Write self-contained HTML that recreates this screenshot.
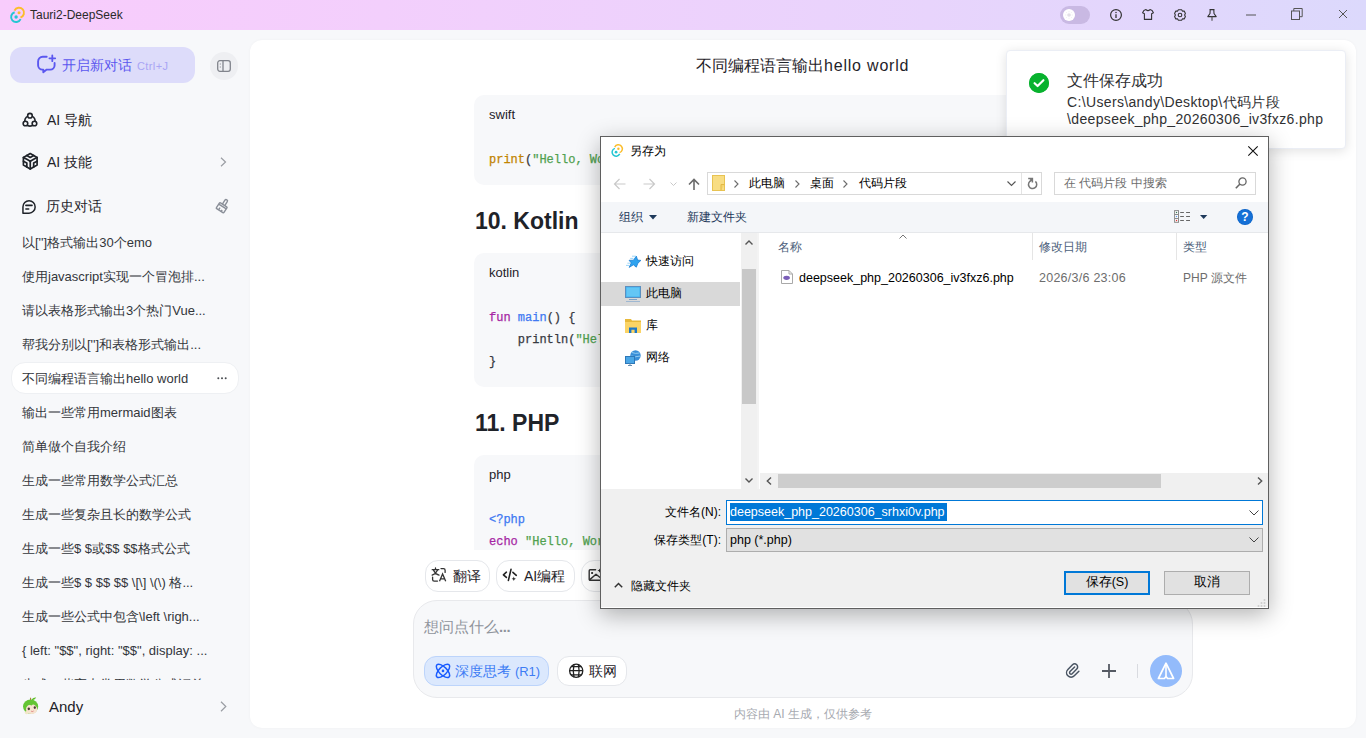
<!DOCTYPE html>
<html><head><meta charset="utf-8">
<style>
*{box-sizing:border-box;margin:0;padding:0}
html,body{width:1366px;height:738px;overflow:hidden}
body{position:relative;background:#f7f8fa;font-family:"Liberation Sans",sans-serif;color:#1f2329}
.a{position:absolute;white-space:nowrap}
svg{position:absolute;overflow:visible}
#tb{left:0;top:0;width:1366px;height:30px;background:linear-gradient(90deg,#f8ccfc 0%,#f3cffc 28%,#e8d4fc 68%,#dcd9fc 100%)}
#main{left:250px;top:40px;width:1106px;height:688px;background:#fff;border-radius:12px;box-shadow:0 0 3px rgba(0,0,0,.04)}
.hist{left:22px;font-size:13px;color:#33363b;line-height:16px}
.code{left:474px;width:656px;background:#f7f8fa;border-radius:10px}
.mono{font-family:"Liberation Mono",monospace;font-size:12px;-webkit-text-stroke:.25px}
.h2{left:475px;font-size:23px;font-weight:bold;color:#1f2329}
.chip{border:1px solid #e5e7eb;border-radius:13px;background:#fff}
</style></head><body>

<!-- title bar -->
<div id="tb" class="a"></div>
<div class="a" style="left:30px;top:7px;font-size:12px;line-height:16px;color:#2a2a2a">Tauri2-DeepSeek</div>

<!-- sidebar -->
<div class="a" style="left:10px;top:47px;width:185px;height:36px;border-radius:12px;background:#dddcfa"></div>
<div class="a" style="left:62px;top:57px;font-size:14px;line-height:16px;color:#5b57ef">开启新对话</div>
<div class="a" style="left:137px;top:59px;font-size:11px;line-height:14px;color:#a9a5f5;letter-spacing:.4px">Ctrl+J</div>
<div class="a" style="left:210px;top:52px;width:28px;height:28px;border-radius:14px;background:#eeeff2"></div>

<div class="a" style="left:47px;top:112px;font-size:14px;line-height:16px;color:#1f2329">AI 导航</div>
<div class="a" style="left:47px;top:154px;font-size:14px;line-height:16px;color:#1f2329">AI 技能</div>
<div class="a" style="left:46px;top:198px;font-size:14px;line-height:16px;color:#1f2329">历史对话</div>

<div class="a" style="left:11px;top:362px;width:228px;height:32px;border-radius:14px;background:#fff;border:1px solid #eef0f3"></div>
<div class="a" style="left:0;top:227px;width:250px;height:453px;overflow:hidden">
  <div class="a hist" style="top:8px">以['']格式输出30个emo</div>
  <div class="a hist" style="top:42px">使用javascript实现一个冒泡排...</div>
  <div class="a hist" style="top:76px">请以表格形式输出3个热门Vue...</div>
  <div class="a hist" style="top:110px">帮我分别以['']和表格形式输出...</div>
  <div class="a hist" style="top:144px">不同编程语言输出hello world</div>
  <div class="a hist" style="top:178px">输出一些常用mermaid图表</div>
  <div class="a hist" style="top:212px">简单做个自我介绍</div>
  <div class="a hist" style="top:246px">生成一些常用数学公式汇总</div>
  <div class="a hist" style="top:280px">生成一些复杂且长的数学公式</div>
  <div class="a hist" style="top:314px">生成一些$ $或$$ $$格式公式</div>
  <div class="a hist" style="top:348px">生成一些$ $ $$ $$ \[\] \(\) 格...</div>
  <div class="a hist" style="top:382px">生成一些公式中包含\left \righ...</div>
  <div class="a hist" style="top:416px">{ left: "$$", right: "$$", display: ...</div>
  <div class="a hist" style="top:450px">生成一些高中常用数学公式汇总</div>
</div>
<div class="a" style="left:49px;top:699px;font-size:15px;line-height:16px;color:#1f2329">Andy</div>

<!-- main -->
<div id="main" class="a"></div>
<div class="a" style="left:696px;top:57px;font-size:16px;line-height:18px;color:#1f2329">不同编程语言输出<span style="letter-spacing:.8px">hello world</span></div>

<div class="a" style="left:250px;top:90px;width:1106px;height:460px;overflow:hidden">
  <div class="a code" style="left:224px;top:5px;height:90px"></div>
  <div class="a" style="left:239px;top:17px;font-size:13px;line-height:16px">swift</div>
  <div class="a mono" style="left:239px;top:62px;line-height:16px"><span style="color:#c18401">print</span><span style="color:#383a42">(</span><span style="color:#50a14f">"Hello, World!"</span><span style="color:#383a42">)</span></div>

  <div class="a h2" style="left:225px;top:118px;line-height:26px">10. Kotlin</div>

  <div class="a code" style="left:224px;top:163px;height:134px"></div>
  <div class="a" style="left:239px;top:175px;font-size:13px;line-height:16px">kotlin</div>
  <div class="a mono" style="left:239px;top:217px;line-height:22px;white-space:pre;color:#383a42"><span style="color:#a626a4">fun</span> <span style="color:#4078f2">main</span>() {
    println(<span style="color:#50a14f">"Hello, World!"</span>)
}</div>

  <div class="a h2" style="left:225px;top:320px;line-height:26px">11. PHP</div>

  <div class="a code" style="left:224px;top:365px;height:134px"></div>
  <div class="a" style="left:239px;top:377px;font-size:13px;line-height:16px">php</div>
  <div class="a mono" style="left:239px;top:419px;line-height:22px;white-space:pre;color:#383a42"><span style="color:#4078f2">&lt;?php</span>
<span style="color:#a626a4">echo</span> <span style="color:#50a14f">"Hello, World!"</span>;
<span style="color:#4078f2">?&gt;</span></div>
</div>

<!-- chips -->
<div class="a chip" style="left:425px;top:560px;width:65px;height:32px"></div>
<div class="a" style="left:453px;top:568px;font-size:14px;line-height:16px;color:#1f2329">翻译</div>
<div class="a chip" style="left:496px;top:560px;width:79px;height:32px"></div>
<div class="a" style="left:524px;top:568px;font-size:14px;line-height:16px;color:#1f2329">AI编程</div>
<div class="a chip" style="left:581px;top:560px;width:79px;height:32px"></div>

<!-- input box -->
<div class="a" style="left:413px;top:600px;width:780px;height:98px;border-radius:24px;background:#f7f8fa;border:1px solid #e8e9ec"></div>
<div class="a" style="left:424px;top:619px;font-size:14.8px;line-height:16px;color:#8f949c">想问点什么<span style="letter-spacing:-.3px;font-weight:bold">...</span></div>
<div class="a" style="left:424px;top:656px;width:125px;height:30px;border-radius:12px;background:#dbe8fd;border:1px solid #bcd4fb"></div>
<div class="a" style="left:455px;top:663px;font-size:14px;line-height:16px;color:#3d7cf4">深度思考 <span style="font-size:13px">(R1)</span></div>
<div class="a chip" style="left:557px;top:656px;width:70px;height:30px;border-radius:12px"></div>
<div class="a" style="left:589px;top:663px;font-size:14px;line-height:16px;color:#1f2329">联网</div>
<div class="a" style="left:1137px;top:664px;width:1px;height:14px;background:#d9dbe0"></div>
<div class="a" style="left:1150px;top:655px;width:32px;height:32px;border-radius:16px;background:#93bbfb"></div>
<div class="a" style="left:734px;top:707px;font-size:12px;line-height:14px;color:#a7aab0">内容由 AI 生成，仅供参考</div>

<!-- toast -->
<div class="a" style="left:1006px;top:50px;width:340px;height:99px;background:#fff;border-radius:4px;box-shadow:0 2px 12px rgba(0,0,0,.12);border:1px solid #ebeef5"></div>
<div class="a" style="left:1029px;top:73px;width:20px;height:20px;border-radius:10px;background:#14b33c"></div>
<div class="a" style="left:1067px;top:72px;font-size:16px;line-height:18px;color:#303133">文件保存成功</div>
<div class="a" style="left:1067px;top:94px;font-size:14px;line-height:17px;color:#303133;letter-spacing:.35px">C:\Users\andy\Desktop\代码片段<br>\deepseek_php_20260306_iv3fxz6.php</div>



<!-- icons -->
<svg style="left:6px;top:3px" width="24" height="24" viewBox="0 0 24 24"><path d="M8.47 7.64A5 5 0 1 1 14.46 14.53" stroke="#fbbd2b" stroke-width="1.9" fill="none"/><circle cx="13" cy="9.75" r="1.5" fill="#fbbd2b"/><path d="M14.63 16.11A5 5 0 1 1 8.64 9.22" stroke="#25c6d2" stroke-width="1.9" fill="none"/><circle cx="10.1" cy="14" r="1.7" fill="#25c6d2"/></svg>
<div class="a" style="left:1060px;top:6px;width:30px;height:18px;border-radius:9px;background:#c9b9e3"></div>
<div class="a" style="left:1063px;top:9px;width:12px;height:12px;border-radius:6px;background:#fff"></div>
<svg style="left:1065px;top:11px" width="8" height="8" viewBox="0 0 8 8"><circle cx="4" cy="4" r="1.8" fill="#e3e0e8"/><path d="M4 0.3V1.2M4 6.8V7.7M0.3 4H1.2M6.8 4H7.7M1.4 1.4L2 2M6 6L6.6 6.6M1.4 6.6L2 6M6 2L6.6 1.4" stroke="#e6e3ea" stroke-width="0.8"/></svg>
<svg style="left:1110px;top:8.5px" width="12" height="12" viewBox="0 0 12 12"><circle cx="6" cy="6" r="5.4" stroke="#333" stroke-width="1.2" fill="none"/><circle cx="6" cy="3.5" r="0.75" fill="#333"/><path d="M6 5.3V9" stroke="#333" stroke-width="1.3"/></svg>
<svg style="left:1142px;top:9px" width="12" height="11" viewBox="0 0 12 11"><path d="M4 0.6L1.9 1.4L0.6 3.8L2.4 4.8V10.4H9.6V4.8L11.4 3.8L10.1 1.4L8 0.6Q6 2.6 4 0.6Z" stroke="#333" stroke-width="1.1" fill="none" stroke-linejoin="round"/></svg>
<svg style="left:1174px;top:8.5px" width="12" height="12" viewBox="0 0 12 12"><path d="M4.4 0.7H7.6L8.4 2.1L10.2 2.1L11.4 4.6L10.6 6L11.4 7.4L10.2 9.9L8.4 9.9L7.6 11.3H4.4L3.6 9.9L1.8 9.9L0.6 7.4L1.4 6L0.6 4.6L1.8 2.1L3.6 2.1Z" stroke="#333" stroke-width="1.1" fill="none" stroke-linejoin="round"/><circle cx="6" cy="6" r="1.8" stroke="#333" stroke-width="1.1" fill="none"/></svg>
<svg style="left:1207px;top:9px" width="10" height="12" viewBox="0 0 10 12"><path d="M2.5 0.6H7.5M3.2 0.6L3 4.5L0.8 7.6H9.2L7 4.5L6.8 0.6" stroke="#333" stroke-width="1.1" fill="none" stroke-linejoin="round"/><path d="M5 7.6V11.8" stroke="#555" stroke-width="1.2"/></svg>
<svg style="left:1246px;top:13.5px" width="10" height="2" viewBox="0 0 10 2"><path d="M0 1H10" stroke="#555" stroke-width="1"/></svg>
<svg style="left:1291px;top:8px" width="12" height="12" viewBox="0 0 12 12"><rect x="0.5" y="3" width="8" height="8.5" stroke="#555" stroke-width="1" fill="none"/><path d="M2.8 3V0.5H11.2V8.7H8.5" stroke="#555" stroke-width="1" fill="none"/></svg>
<svg style="left:1339px;top:10px" width="8" height="8" viewBox="0 0 8 8"><path d="M0 0L8 8M8 0L0 8" stroke="#555" stroke-width="1"/></svg>

<svg style="left:34px;top:52px" width="26" height="26" viewBox="0 0 26 26"><path d="M12.7 4.8H8.7A4.6 4.6 0 0 0 4.1 9.4V13.3A4.3 4.3 0 0 0 8.4 17.6H9.3V20.2L12.7 17.6H16.3A4.3 4.3 0 0 0 20.6 13.3V10.9" stroke="#5b57ef" stroke-width="1.9" fill="none" stroke-linecap="round" stroke-linejoin="round"/><path d="M18.3 3.4V9.2M15.4 6.3H21.2" stroke="#5b57ef" stroke-width="1.8" stroke-linecap="round"/></svg>
<svg style="left:217px;top:60px" width="14" height="12" viewBox="0 0 14 12"><rect x="0.7" y="0.7" width="12.6" height="10.6" rx="2.2" stroke="#81848c" stroke-width="1.3" fill="none"/><path d="M6 0.7V11.3" stroke="#81848c" stroke-width="1.3"/><path d="M2.8 4H3.8M2.8 7H3.8" stroke="#81848c" stroke-width="1"/></svg>

<svg style="left:18px;top:108px" width="24" height="24" viewBox="0 0 24 24"><circle cx="11.95" cy="12.9" r="5.2" stroke="#1f2329" stroke-width="1.6" fill="none"/><circle cx="11.95" cy="7.7" r="2.3" stroke="#1f2329" stroke-width="1.6" fill="#f7f8fa"/><circle cx="7.45" cy="15.5" r="2.3" stroke="#1f2329" stroke-width="1.6" fill="#f7f8fa"/><circle cx="16.45" cy="15.5" r="2.3" stroke="#1f2329" stroke-width="1.6" fill="#f7f8fa"/></svg>
<svg style="left:19.75px;top:151.45px" width="20.5" height="20.5" viewBox="0 0 24 24"><g stroke="#1f2329" stroke-width="2" fill="none" stroke-linecap="round" stroke-linejoin="round"><path d="M20 7.5v9l-4 2.25l-4 2.25l-4 -2.25l-4 -2.25v-9l4 -2.25l4 -2.25l4 2.25z"/><path d="M12 12l4 -2.25l4 -2.25"/><path d="M12 12l0 9"/><path d="M12 12l-4 -2.25l-4 -2.25"/><path d="M20 12l-4 2v4.75"/><path d="M4 12l4 2l0 4.75"/><path d="M8 5.25l4 2.25l4 -2.25"/></g></svg>
<svg style="left:17px;top:195px" width="24" height="24" viewBox="0 0 24 24"><path d="M5.95 18.15V11.95A6.1 6.2 0 1 1 12.05 18.15Z" stroke="#1f2329" stroke-width="1.5" fill="none" stroke-linejoin="round"/><path d="M8.9 10.4H15M8.9 14H11.7" stroke="#1f2329" stroke-width="1.6" stroke-linecap="round"/></svg>
<svg style="left:220px;top:157px" width="7" height="10" viewBox="0 0 7 10"><path d="M1 0.8L5.5 5L1 9.2" stroke="#9a9da3" stroke-width="1.2" fill="none"/></svg>
<svg style="left:210px;top:193px" width="24" height="24" viewBox="0 0 24 24"><g transform="translate(12.5 13.5) rotate(33)" stroke="#8a8f98" stroke-width="1.4" fill="none" stroke-linejoin="round"><path d="M-1.4 -2V-6.6A1.4 1.4 0 0 1 1.4 -6.6V-2"/><rect x="-4.5" y="-2" width="9" height="7" rx="0.8"/><path d="M-4.5 0H4.5M-1.5 2.2V5M1.5 3V5"/></g></svg>
<svg style="left:217px;top:377px" width="10" height="3" viewBox="0 0 10 3"><circle cx="1.3" cy="1.3" r="1" fill="#4a4d52"/><circle cx="5" cy="1.3" r="1" fill="#4a4d52"/><circle cx="8.7" cy="1.3" r="1" fill="#4a4d52"/></svg>
<svg style="left:22px;top:697px" width="18" height="18" viewBox="0 0 18 18"><path d="M8.6 3.3Q8.3 1.6 8.8 0.8" stroke="#b07a3a" stroke-width="1.1" fill="none"/><path d="M9.5 2.6Q11.5 0.2 14.2 0.6Q13.2 2.8 10.5 3.2Z" fill="#5fc02a"/><ellipse cx="8.6" cy="9.6" rx="7.6" ry="7.2" fill="#64c534"/><ellipse cx="9.6" cy="12.2" rx="5.6" ry="4.9" fill="#f6e2cf"/><path d="M3.5 9.5Q6 6.5 9.5 8.5Q12 6 15.5 8Q14 5 9 5Q4.5 5 3.5 9.5Z" fill="#64c534"/><ellipse cx="6.8" cy="11.8" rx="1.2" ry="1.4" fill="#4a3b36"/><ellipse cx="12.8" cy="10.6" rx="1.1" ry="1.3" fill="#4a3b36"/><path d="M9.2 14.2Q10.4 15 11.6 14" stroke="#d77" stroke-width="0.9" fill="none"/><ellipse cx="4.6" cy="15.6" rx="1.8" ry="1.6" fill="#f2e6c8"/></svg>
<svg style="left:220px;top:701px" width="7" height="11" viewBox="0 0 7 11"><path d="M1 0.8L5.8 5.5L1 10.2" stroke="#9a9da3" stroke-width="1.2" fill="none"/></svg>

<!-- chips icons -->
<svg style="left:427px;top:564px" width="24" height="24" viewBox="0 0 24 24"><g stroke="#333" stroke-width="1.3" fill="none" stroke-linecap="round"><path d="M5.2 5.7H11.8M8.5 4V5.7M6.4 6Q8 9.8 12 11.2M10.6 6Q9 9.8 5.2 11.2"/><path d="M14 4.6H16.5A1.6 1.6 0 0 1 18.1 6.2V8.4M5.6 13.1V15.5A1.6 1.6 0 0 0 7.2 17.1H10.5"/><path d="M12.5 17.3L15.6 9.9L18.7 17.3M13.6 14.8H17.6" stroke-linecap="butt"/></g></svg>
<svg style="left:499px;top:564px" width="24" height="24" viewBox="0 0 24 24"><g stroke="#222" stroke-width="1.6" fill="none" stroke-linecap="round" stroke-linejoin="round"><path d="M7.4 8.2L4.4 10.8L7.4 13.4"/><path d="M12 5.4L9.4 16.4"/><path d="M13.9 8.3L17.3 11.3"/></g><path d="M14.8 12.6L15.4 14.2L17 14.8L15.4 15.4L14.8 17L14.2 15.4L12.6 14.8L14.2 14.2Z" fill="#222"/></svg>
<svg style="left:583px;top:564px" width="24" height="24" viewBox="0 0 24 24"><g stroke="#333" stroke-width="1.4" fill="none" stroke-linecap="round" stroke-linejoin="round"><path d="M12.6 5.8H7.2A1 1 0 0 0 6.2 6.8V15.2A1 1 0 0 0 7.2 16.2H18"/><path d="M6.8 15.6L13 10.2L18 14.2"/></g><circle cx="9.1" cy="9" r="1.1" fill="#222"/><path d="M16.6 4.4L17.2 6L18.8 6.6L17.2 7.2L16.6 8.8L16 7.2L14.4 6.6L16 6Z" fill="#222"/></svg>
<svg style="left:431px;top:659px" width="24" height="24" viewBox="0 0 24 24"><g stroke="#1a5cff" stroke-width="1.5" fill="none"><ellipse cx="12" cy="11.9" rx="8.6" ry="3.9" transform="rotate(45 12 11.9)"/><ellipse cx="12" cy="11.9" rx="8.6" ry="3.9" transform="rotate(-45 12 11.9)"/></g><circle cx="12" cy="11.9" r="1.3" fill="#1a5cff"/></svg>
<svg style="left:564px;top:659px" width="24" height="24" viewBox="0 0 24 24"><g stroke="#222" stroke-width="1.3" fill="none"><circle cx="12.2" cy="11.8" r="6.6"/><path d="M5.6 11.6H18.8M7 7.6H17.4M7 15.9H17.4"/><path d="M10 5.4Q8.6 11.8 10 18.2M14.4 5.4Q15.8 11.8 14.4 18.2"/></g></svg>
<svg style="left:1063.8px;top:662.3px" width="17" height="17" viewBox="0 0 24 24"><path d="M15 7l-6.5 6.5a1.5 1.5 0 0 0 3 3l6.5 -6.5a3 3 0 0 0 -6 -6l-6.5 6.5a4.5 4.5 0 0 0 9 9l6.5 -6.5" stroke="#4a5563" stroke-width="2.1" fill="none" stroke-linecap="round" stroke-linejoin="round"/></svg>
<svg style="left:1102px;top:664px" width="14" height="14" viewBox="0 0 14 14"><path d="M7 0V14M0 7H14" stroke="#555a63" stroke-width="1.8"/></svg>
<svg style="left:1150px;top:655px" width="32" height="32" viewBox="0 0 32 32"><path d="M16 8.2L23.6 23.5H17.6L16 21.4L14.4 23.5H8.4Z" stroke="#fff" stroke-width="1.7" fill="none" stroke-linejoin="round"/><path d="M16 8.5V21.6" stroke="#fff" stroke-width="1.6"/></svg>
<svg style="left:1029px;top:73px" width="20" height="20" viewBox="0 0 20 20"><circle cx="10" cy="10" r="10" fill="#08b22e"/><path d="M5.6 10.2L8.6 13L14.4 7.2" stroke="#fff" stroke-width="2.2" fill="none" stroke-linecap="round" stroke-linejoin="round"/></svg>

<!-- dialog -->
<div id="dlg" class="a" style="left:600px;top:136px;width:669px;height:473px;background:#fff;border:1px solid #5f5f5f;box-shadow:0 6px 22px rgba(0,0,0,.30)"></div>
<svg style="left:607.9px;top:140.8px" width="19.2" height="19.2" viewBox="0 0 24 24"><path d="M8.47 7.64A5 5 0 1 1 14.46 14.53" stroke="#fbbd2b" stroke-width="1.9" fill="none"/><circle cx="13" cy="9.75" r="1.5" fill="#fbbd2b"/><path d="M14.63 16.11A5 5 0 1 1 8.64 9.22" stroke="#25c6d2" stroke-width="1.9" fill="none"/><circle cx="10.1" cy="14" r="1.7" fill="#25c6d2"/></svg>
<div class="a dt" style="left:630px;top:144px;font-size:12px;line-height:15px;color:#000">另存为</div>
<svg style="left:1248px;top:146px" width="10" height="10" viewBox="0 0 10 10"><path d="M0.3 0.3L9.7 9.7M9.7 0.3L0.3 9.7" stroke="#111" stroke-width="1.1" fill="none"/></svg>
<!-- nav arrows -->
<svg style="left:613px;top:178px" width="13" height="12" viewBox="0 0 13 12"><path d="M12.5 6H1.5M6.5 1L1.5 6L6.5 11" stroke="#c9c9c9" stroke-width="1.2" fill="none"/></svg>
<svg style="left:643px;top:178px" width="13" height="12" viewBox="0 0 13 12"><path d="M0.5 6H11.5M6.5 1L11.5 6L6.5 11" stroke="#c9c9c9" stroke-width="1.2" fill="none"/></svg>
<svg style="left:670px;top:182px" width="7" height="4" viewBox="0 0 7 4"><path d="M0.5 0.5L3.5 3.5L6.5 0.5" stroke="#c9c9c9" stroke-width="1" fill="none"/></svg>
<svg style="left:688px;top:178px" width="12" height="12" viewBox="0 0 12 12"><path d="M6 12V1.5M1 6.5L6 1.5L11 6.5" stroke="#6b6b6b" stroke-width="1.6" fill="none"/></svg>
<!-- address bar -->
<div class="a" style="left:707px;top:172px;width:335px;height:23px;border:1px solid #d9d9d9;background:#fff"></div>
<div class="a" style="left:1021px;top:173px;width:1px;height:21px;background:#e3e3e3"></div>
<svg style="left:712px;top:175px" width="13" height="16" viewBox="0 0 13 16"><rect x="0.5" y="0.5" width="12" height="15" fill="#f8dd83" stroke="#e8c352" stroke-width="1"/><path d="M9 15.5V9.5H12.5" stroke="#e3b945" fill="#f5d46c"/></svg>
<svg style="left:734px;top:180px" width="5" height="8" viewBox="0 0 5 8"><path d="M0.5 0.5L4 4L0.5 7.5" stroke="#6b6b6b" stroke-width="1.1" fill="none"/></svg>
<div class="a dt" style="left:749px;top:176px;font-size:12px;line-height:15px;color:#000">此电脑</div>
<svg style="left:795px;top:180px" width="5" height="8" viewBox="0 0 5 8"><path d="M0.5 0.5L4 4L0.5 7.5" stroke="#6b6b6b" stroke-width="1.1" fill="none"/></svg>
<div class="a dt" style="left:810px;top:176px;font-size:12px;line-height:15px;color:#000">桌面</div>
<svg style="left:843px;top:180px" width="5" height="8" viewBox="0 0 5 8"><path d="M0.5 0.5L4 4L0.5 7.5" stroke="#6b6b6b" stroke-width="1.1" fill="none"/></svg>
<div class="a dt" style="left:859px;top:176px;font-size:12px;line-height:15px;color:#000">代码片段</div>
<svg style="left:1007px;top:181px" width="9" height="5" viewBox="0 0 9 5"><path d="M0.5 0.5L4.5 4.5L8.5 0.5" stroke="#555" stroke-width="1.1" fill="none"/></svg>
<svg style="left:1022px;top:172px" width="20" height="23" viewBox="0 0 20 23"><path d="M9.4 8.5A4.1 4.1 0 1 0 13.4 9.4" stroke="#777" stroke-width="1.5" fill="none"/><path d="M6.2 6.4H10.4V10.4M10.4 6.4L8.2 8.6" stroke="#777" stroke-width="1.5" fill="none"/></svg>
<!-- search -->
<div class="a" style="left:1054px;top:172px;width:202px;height:23px;border:1px solid #d9d9d9;background:#fff"></div>
<div class="a dt" style="left:1064px;top:176px;font-size:12px;line-height:15px;color:#6d6d6d">在 代码片段 中搜索</div>
<svg style="left:1235px;top:177px" width="12" height="12" viewBox="0 0 12 12"><circle cx="7.5" cy="4.5" r="3.6" stroke="#666" stroke-width="1.3" fill="none"/><path d="M5 7L0.8 11.2" stroke="#666" stroke-width="1.6"/></svg>
<!-- toolbar -->
<div class="a" style="left:601px;top:202px;width:667px;height:31px;background:#f4f6f9;border-bottom:1px solid #e6e8eb"></div>
<div class="a dt" style="left:619px;top:210px;font-size:12px;line-height:15px;color:#1e395b">组织</div>
<svg style="left:649px;top:215px" width="8" height="5" viewBox="0 0 8 5"><path d="M0 0H8L4 4.5Z" fill="#1e395b"/></svg>
<div class="a dt" style="left:687px;top:210px;font-size:12px;line-height:15px;color:#1e395b">新建文件夹</div>
<svg style="left:1170px;top:205px" width="40" height="25" viewBox="0 0 40 25"><rect x="4.6" y="5.6" width="3.9" height="11.7" fill="#fff" stroke="#8a8a8a" stroke-width="1"/><path d="M4.6 9.5H8.5M4.6 13.5H8.5" stroke="#8a8a8a" stroke-width="1"/><circle cx="6.55" cy="7.5" r=".7" fill="#3a7a5a"/><circle cx="6.55" cy="11.5" r=".7" fill="#5b9cf0"/><circle cx="6.55" cy="15.5" r=".7" fill="#d33"/><path d="M10.2 7.5H13.9M16.1 7.5H20M10.2 11.5H13.9M16.1 11.5H20M10.2 15.5H13.9M16.1 15.5H20" stroke="#666" stroke-width="1"/></svg>
<svg style="left:1199.8px;top:214.8px" width="8" height="5" viewBox="0 0 8 5"><path d="M0 0H7.3L3.65 4.1Z" fill="#1e395b"/></svg>
<svg style="left:1237px;top:209px" width="16" height="16" viewBox="0 0 16 16"><circle cx="8" cy="8" r="8" fill="#0b63c7"/><circle cx="8" cy="8" r="7.3" fill="#1570d6"/><text x="8" y="12.2" text-anchor="middle" font-family="Liberation Sans" font-weight="bold" font-size="12" fill="#fff">?</text></svg>
<!-- nav pane -->
<div class="a" style="left:601px;top:282px;width:139px;height:24px;background:#d9d9d9"></div>
<svg style="left:620px;top:252px" width="24" height="20" viewBox="0 0 24 20"><path d="M16.3 4.1L17.6 8.1L20.9 8.4L17.9 11.2L16.3 15.2L13.4 12.8L9.2 15.4L11.2 10.9L9.1 8.3L13.5 8.2Z" fill="#2ea3ef" stroke="#1a7fd4" stroke-width="0.8" stroke-linejoin="round"/><path d="M12 4.2H16M10.2 6.4H13.4M7.4 11.2H10M6 13.4H9" stroke="#8fd0f7" stroke-width="0.9"/></svg>
<div class="a dt" style="left:646px;top:254px;font-size:12px;line-height:15px;color:#000">快速访问</div>
<svg style="left:625px;top:286px" width="16" height="16" viewBox="0 0 16 16"><rect x="0.5" y="0.5" width="15" height="11" fill="#3fb1ef" stroke="#5b8fbf" stroke-width="1"/><rect x="1.5" y="1.5" width="13" height="9" fill="#63c6f5"/><path d="M4 13.5H12" stroke="#7aa2c8" stroke-width="1"/><path d="M1 15.5H15" stroke="#9fb8d2" stroke-width="1"/></svg>
<div class="a dt" style="left:646px;top:286px;font-size:12px;line-height:15px;color:#000">此电脑</div>
<svg style="left:625px;top:318px" width="16" height="15" viewBox="0 0 16 15"><path d="M0 1H6L7 2.5H16V15H0Z" fill="#e8b93a"/><rect x="0" y="4" width="16" height="11" fill="#fbd466"/><path d="M4 15V9.5H12V15H9.6V11.8H6.4V15Z" fill="#1e78c8"/></svg>
<div class="a dt" style="left:646px;top:318px;font-size:12px;line-height:15px;color:#000">库</div>
<svg style="left:625px;top:350px" width="16" height="16" viewBox="0 0 16 16"><circle cx="10.5" cy="5.5" r="5.2" fill="#3a8fd8"/><path d="M7 2.5Q10 4 14.5 3M6.5 6Q10 7.5 15.5 6" stroke="#9dd2f5" stroke-width="0.9" fill="none"/><rect x="0.5" y="6.5" width="9" height="7" fill="#4aa6e6" stroke="#2e78b8" stroke-width="1"/><path d="M3 15.5H7M5 13.5V15.5" stroke="#6a8fb0" stroke-width="1"/></svg>
<div class="a dt" style="left:646px;top:350px;font-size:12px;line-height:15px;color:#000">网络</div>
<!-- v scrollbar -->
<div class="a" style="left:741px;top:233px;width:16px;height:256px;background:#f0f0f0"></div>
<div class="a" style="left:742px;top:269px;width:14px;height:135px;background:#c8c8c8"></div>
<svg style="left:745px;top:240px" width="8" height="5" viewBox="0 0 8 5"><path d="M0.5 4.5L4 1L7.5 4.5" stroke="#555" stroke-width="1.4" fill="none"/></svg>
<svg style="left:745px;top:478px" width="8" height="5" viewBox="0 0 8 5"><path d="M0.5 0.5L4 4L7.5 0.5" stroke="#555" stroke-width="1.4" fill="none"/></svg>
<div class="a" style="left:757px;top:233px;width:2px;height:256px;background:#f3f3f3"></div>
<!-- content pane -->
<svg style="left:899px;top:234px" width="8" height="5" viewBox="0 0 8 5"><path d="M0.5 4.5L4 1L7.5 4.5" stroke="#666" stroke-width="0.9" fill="none"/></svg>
<div class="a dt" style="left:778px;top:240px;font-size:12px;line-height:15px;color:#4c607a">名称</div>
<div class="a" style="left:1032px;top:233px;width:1px;height:27px;background:#e5e5e5"></div>
<div class="a dt" style="left:1039px;top:240px;font-size:12px;line-height:15px;color:#4c607a">修改日期</div>
<div class="a" style="left:1176px;top:233px;width:1px;height:27px;background:#e5e5e5"></div>
<div class="a dt" style="left:1183px;top:240px;font-size:12px;line-height:15px;color:#4c607a">类型</div>
<svg style="left:781px;top:270px" width="12" height="14" viewBox="0 0 12 14"><path d="M0.5 0.5H8L11.5 4V13.5H0.5Z" fill="#fff" stroke="#a9a9a9" stroke-width="1"/><path d="M8 0.5V4H11.5" fill="none" stroke="#a9a9a9" stroke-width="1"/><ellipse cx="5.6" cy="7.8" rx="3.3" ry="2.1" fill="#7b5fb8"/></svg>
<div class="a dt" style="left:799px;top:271px;font-size:12.5px;line-height:15px;color:#000">deepseek_php_20260306_iv3fxz6.php</div>
<div class="a dt" style="left:1039px;top:271px;font-size:12.5px;line-height:15px;color:#6d6d6d;letter-spacing:.25px">2026/3/6 23:06</div>
<div class="a dt" style="left:1183px;top:271px;font-size:12px;line-height:15px;color:#6d6d6d">PHP 源文件</div>
<!-- h scrollbar -->
<div class="a" style="left:760px;top:473px;width:508px;height:16px;background:#f0f0f0"></div>
<div class="a" style="left:778px;top:474px;width:383px;height:14px;background:#cdcdcd"></div>
<svg style="left:766px;top:477px" width="6" height="8" viewBox="0 0 6 8"><path d="M5 0.5L1.3 4L5 7.5" stroke="#555" stroke-width="1.4" fill="none"/></svg>
<svg style="left:1257px;top:477px" width="6" height="8" viewBox="0 0 6 8"><path d="M1 0.5L4.7 4L1 7.5" stroke="#555" stroke-width="1.4" fill="none"/></svg>
<!-- bottom -->
<div class="a" style="left:601px;top:489px;width:667px;height:118px;background:#f0f0f0"></div>
<div class="a dt" style="left:620px;top:505px;width:101px;text-align:right;font-size:12px;line-height:15px;color:#000">文件名(N):</div>
<div class="a" style="left:726px;top:500px;width:537px;height:25px;border:1px solid #0078d7;background:#fff"></div>
<div class="a" style="left:730px;top:503px;width:217px;height:18px;background:#0078d7"></div>
<div class="a dt" style="left:730px;top:505px;font-size:12.5px;line-height:15px;color:#fff">deepseek_php_20260306_srhxi0v.php</div>
<svg style="left:1249px;top:510px" width="10" height="6" viewBox="0 0 10 6"><path d="M0.5 0.5L5 5L9.5 0.5" stroke="#444" stroke-width="1" fill="none"/></svg>
<div class="a dt" style="left:600px;top:533px;width:121px;text-align:right;font-size:12px;line-height:15px;color:#000">保存类型(T):</div>
<div class="a" style="left:726px;top:528px;width:537px;height:24px;border:1px solid #adadad;background:#e1e1e1"></div>
<div class="a dt" style="left:730px;top:533px;font-size:12.5px;line-height:15px;color:#000">php (*.php)</div>
<svg style="left:1249px;top:537px" width="10" height="6" viewBox="0 0 10 6"><path d="M0.5 0.5L5 5L9.5 0.5" stroke="#444" stroke-width="1" fill="none"/></svg>
<svg style="left:614px;top:582px" width="9" height="6" viewBox="0 0 9 6"><path d="M0.8 5.2L4.5 1.5L8.2 5.2" stroke="#333" stroke-width="1.5" fill="none"/></svg>
<div class="a dt" style="left:631px;top:579px;font-size:12px;line-height:15px;color:#000">隐藏文件夹</div>
<div class="a" style="left:1064px;top:571px;width:86px;height:24px;border:2px solid #0078d7;background:#e1e1e1"></div>
<div class="a dt" style="left:1064px;top:575px;width:86px;text-align:center;font-size:12.5px;line-height:15px;color:#000">保存(S)</div>
<div class="a" style="left:1164px;top:571px;width:86px;height:24px;border:1px solid #adadad;background:#e1e1e1"></div>
<div class="a dt" style="left:1164px;top:575px;width:86px;text-align:center;font-size:12.5px;line-height:15px;color:#000">取消</div>
<svg style="left:1257px;top:598px" width="9" height="9" viewBox="0 0 9 9"><path d="M7.5 1.5V2.5M7.5 4.5V5.5M4.5 4.5V5.5M7.5 7.5V8.5M4.5 7.5V8.5M1.5 7.5V8.5" stroke="#b0b0b0" stroke-width="1.6"/></svg>

</body></html>
